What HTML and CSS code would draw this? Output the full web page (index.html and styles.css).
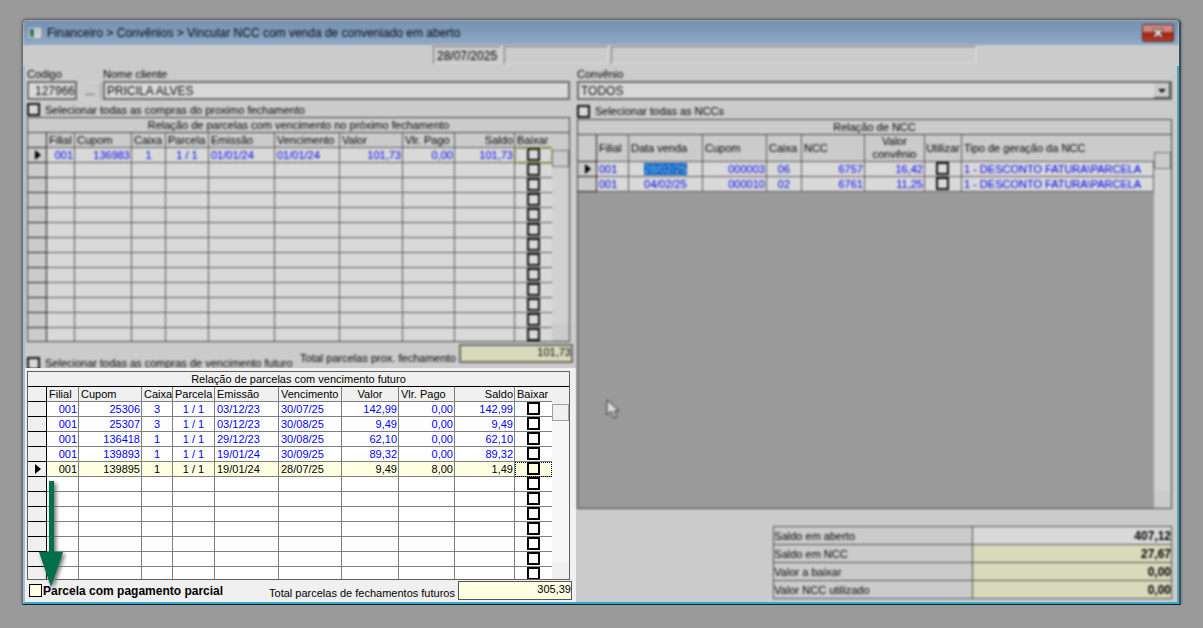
FILE: index.html
```html
<!DOCTYPE html>
<html lang="pt-BR">
  <head>
    <meta charset="UTF-8" />
    <title>Financeiro</title>
    <link rel="stylesheet" href="styles.css">
  </head>
  <body>
    <div class="window">
      <header class="titlebar soft">
        <svg class="app-icon" viewBox="0 0 14 12" width="14" height="12">
          <rect x="0" y="0" width="14" height="12" fill="#8b969c" />
          <rect x="1" y="1" width="12" height="10" fill="#d4dadb" />
          <rect x="2" y="2" width="4" height="4" fill="#2b5f80" />
          <rect x="2" y="6" width="4" height="4" fill="#2d8257" />
          <rect x="9" y="2" width="1" height="6" fill="#8b969c" />
        </svg>
        <h1>Financeiro &gt; Convênios &gt; Vincular NCC com venda de conveniado em aberto</h1>
        <button class="close" type="button" aria-label="Fechar">
          <svg viewBox="0 0 12 10" width="12" height="10">
            <path d="M1 1h3l2 2 2-2h3v1L8 5l3 3v1H8L6 7 4 9H1V8l3-3-3-3z" fill="#e4e4e4" stroke="#533" />
          </svg>
        </button>
      </header>

      <div class="status soft">
        <span class="date">28/07/2025</span>
        <span class="user"></span>
        <span class="info"></span>
      </div>

      <main class="content">
        <section class="left">
          <div class="soft">
            <div class="client">
              <div class="code">
                <label for="codigo">Codigo</label>
                <input type="text" id="codigo" value="127966" />
              </div>
              <button class="lookup" type="button">...</button>
              <div class="name">
                <label for="nome">Nome cliente</label>
                <input type="text" id="nome" value="PRICILA ALVES" />
              </div>
            </div>
            <label class="check select-all"><input type="checkbox" /> Selecionar todas as compras do proximo fechamento</label>

            <div class="grid">
              <h2 id="proximoTitle">Relação de parcelas com vencimento no próximo fechamento</h2>
              <div class="grid-body next-body">
                <table class="next" aria-labelledby="proximoTitle">
                  <colgroup>
                    <col class="marker" /><col class="filial" /><col class="cupom" /><col class="caixa" />
                    <col class="parcela" /><col class="emissao" /><col class="vencimento" /><col class="valor" />
                    <col class="pago" /><col class="saldo" /><col class="baixar" />
                  </colgroup>
                  <thead>
                    <tr>
                      <th></th><th>Filial</th><th>Cupom</th><th>Caixa</th><th>Parcela</th><th>Emissão</th>
                      <th>Vencimento</th><th>Valor</th><th>Vlr. Pago</th><th class="num">Saldo</th><th>Baixar</th>
                    </tr>
                  </thead>
                  <tbody id="nextRows"></tbody>
                </table>
                <div class="scroll"><i class="up"></i><i class="thumb"></i><i class="track"></i><i class="down"></i></div>
              </div>
            </div>

            <div class="next-total">
              <label class="check"><input type="checkbox" /> Selecionar todas as compras de vencimento futuro</label>
              <label for="totalNext">Total parcelas prox. fechamento</label>
              <input class="total" type="text" id="totalNext" value="101,73" readonly />
            </div>
          </div>

          <div class="future-panel">
            <div class="grid">
              <h2 id="futuroTitle">Relação de parcelas com vencimento futuro</h2>
              <div class="grid-body future-body">
                <table class="future" aria-labelledby="futuroTitle">
                  <colgroup>
                    <col class="marker" /><col class="filial" /><col class="cupom" /><col class="caixa" />
                    <col class="parcela" /><col class="emissao" /><col class="vencimento" /><col class="valor" />
                    <col class="pago" /><col class="saldo" /><col class="baixar" />
                  </colgroup>
                  <thead>
                    <tr>
                      <th></th><th>Filial</th><th>Cupom</th><th>Caixa</th><th>Parcela</th><th>Emissão</th>
                      <th>Vencimento</th><th class="mid">Valor</th><th>Vlr. Pago</th><th class="num">Saldo</th><th>Baixar</th>
                    </tr>
                  </thead>
                  <tbody id="futureRows"></tbody>
                </table>
                <div class="scroll"><i class="up"></i><i class="thumb"></i><i class="track"></i><i class="down"></i></div>
              </div>
            </div>
            <div class="future-total">
              <label class="check partial"><input type="checkbox" />Parcela com pagamento parcial</label>
              <label for="totalFuture">Total parcelas de fechamentos futuros</label>
              <input class="total" type="text" id="totalFuture" value="305,39" readonly />
            </div>
            <svg class="arrow" viewBox="0 0 24 106" width="24" height="106">
              <path d="M10 0h5v71h9L12 106 0 71h10z" fill="#00704a" />
            </svg>
          </div>
        </section>

        <section class="right soft">
          <label for="convenio">Convênio</label>
          <div class="combo">
            <select id="convenio">
              <option>TODOS</option>
            </select>
            <svg viewBox="0 0 16 15" width="16" height="15">
              <path d="M0 0h16v15H0z" fill="#444" />
              <path d="M0 0h15v14H0z" fill="#cbcbcb" />
              <path d="M4 6h8l-4 4z" fill="#111" />
            </svg>
          </div>
          <label class="check select-all"><input type="checkbox" /> Selecionar todas as NCCs</label>

          <div class="grid ncc-grid">
            <h2 id="nccTitle">Relação de NCC</h2>
            <div class="grid-body ncc-body">
              <div class="ncc-area">
                <table class="ncc" aria-labelledby="nccTitle">
                  <colgroup>
                    <col class="marker" /><col class="filial" /><col class="venda" /><col class="cupom" />
                    <col class="caixa" /><col class="numero" /><col class="valor" /><col class="utilizar" /><col />
                  </colgroup>
                  <thead>
                    <tr>
                      <th></th><th>Filial</th><th>Data venda</th><th>Cupom</th><th>Caixa</th><th>NCC</th>
                      <th class="mid">Valor convênio</th><th class="tick">Utilizar</th><th>Tipo de geração da NCC</th>
                    </tr>
                  </thead>
                  <tbody id="nccRows"></tbody>
                </table>
              </div>
              <div class="scroll"><i class="up"></i><i class="thumb"></i><i class="track"></i><i class="down"></i></div>
            </div>
          </div>

          <table class="summary">
            <tr><th>Saldo em aberto</th><td class="open">407,12</td></tr>
            <tr><th>Saldo em NCC</th><td>27,67</td></tr>
            <tr><th>Valor a baixar</th><td>0,00</td></tr>
            <tr><th>Valor NCC utilizado</th><td>0,00</td></tr>
          </table>
        </section>
      </main>
    </div>

    <svg class="cursor soft" viewBox="0 0 13 20" width="13" height="20">
      <path d="M1 1v15l4-4 3 7 3-1-3-6h5z" fill="#ddd" stroke="#333" />
    </svg>

    <script src="script.js"></script>
  </body>
</html>
```

FILE: styles.css
```css
body {
  font-family: "Liberation Sans", Arial, sans-serif;
  font-size: 11px;
  line-height: 14px;
  margin: 0;
  padding: 19px 22px 0;
  background-color: #9a9a9a;
  color: #000;
}
.window {
  border: 1px solid #686b6e;
  border-right: 2px solid #35525c;
  border-bottom: 1px solid #10252c;
  border-radius: 5px 5px 0 0;
  box-shadow: 0 0 3px #555;
  background-color: #cbcbcb;
  overflow: hidden;
}
/* everything outside the focused panel is drawn out of focus */
.soft {
  filter: blur(1px);
  color: #000;
}
.titlebar {
  display: flex;
  align-items: center;
  height: 25px;
  padding: 0 5px;
  background: linear-gradient(#7490b0, #8fa9c6);
}
.app-icon {
  margin-right: 5px;
}
h1 {
  flex: 1;
  margin: 0;
  font-size: 12px;
  font-weight: normal;
  color: #000a14;
}
.close {
  display: flex;
  align-items: center;
  justify-content: center;
  width: 32px;
  height: 18px;
  padding: 0;
  border: 1px solid #5b2a2a;
  border-radius: 2px;
  background: linear-gradient(#c98a80 40%, #a01c08 50%, #b5402c);
}
.status {
  display: flex;
  gap: 3px;
  padding: 1px 203px 2px 410px;
}
.status span {
  height: 18px;
  line-height: 18px;
  box-sizing: border-box;
  border: 1px solid #dcdcdc;
  border-top-color: #777;
  border-left-color: #777;
  padding: 0 3px;
}
.status .date {
  width: 68px;
  font-size: 12px;
}
.status .user {
  width: 104px;
}
.status .info {
  flex: 1;
}
.content {
  display: grid;
  grid-template-columns: 11fr 12fr;
  border-left: 2px solid #a9bed2;
  border-right: 2px solid #57a3b8;
  border-bottom: 2px solid #35aac6;
}
.left {
  min-width: 0;
}
input[type="text"],
select {
  font: inherit;
  display: block;
  width: 100%;
  height: 19px;
  margin: 0;
  padding: 0 2px;
  box-sizing: border-box;
  border: 2px solid #6c6c6c;
  border-radius: 0;
  background-color: #d9d9d9;
  color: #111;
}
.client {
  display: flex;
  align-items: flex-end;
  padding: 1px 6px 0 2px;
}
.client input[type="text"] {
  font-size: 12px;
}
.client .code {
  width: 50px;
}
.client .code input {
  text-align: right;
  padding: 0;
}
.client .name {
  flex: 1;
}
.lookup {
  width: 22px;
  height: 18px;
  margin: 0 2px;
  padding: 0;
  border: 1px solid #d4d4d4;
  border-right-color: #999;
  background-color: #cbcbcb;
  font: inherit;
}
.check {
  display: flex;
  align-items: center;
  gap: 5px;
}
input[type="checkbox"] {
  appearance: none;
  display: block;
  flex: none;
  width: 13px;
  height: 13px;
  margin: 0;
  box-sizing: border-box;
  border: 2px solid #000;
  background-color: #fff;
}
.soft input[type="checkbox"] {
  border-color: #111;
  background-color: #d9d9d9;
}
.select-all {
  height: 17px;
  padding: 2px 0 0 2px;
  box-sizing: border-box;
}

/* data grids */
.grid {
  margin: 0 6px 0 2px;
  border: 1px solid #606060;
}
.grid h2 {
  margin: 0;
  border-bottom: 1px solid #000;
  font-size: 11px;
  font-weight: normal;
  text-align: center;
}
.soft .grid,
.soft .grid h2 {
  border-color: #444;
}
.grid-body {
  display: flex;
  align-items: flex-start;
  overflow: hidden;
}
.next-body {
  height: 208px;
}
.future-body {
  height: 192px;
}
.grid table {
  flex: 1;
  width: 100%;
  table-layout: fixed;
  border-collapse: separate;
  border-spacing: 0;
}
.grid th,
.grid td {
  height: 15px;
  padding: 0 2px;
  box-sizing: border-box;
  border-right: 1px solid #808080;
  border-bottom: 1px solid #808080;
  font-weight: normal;
  text-align: left;
  white-space: nowrap;
  overflow: hidden;
}
.soft .grid th,
.soft .grid td {
  border-color: #5c5c5c;
}
.grid td {
  background-color: #fff;
  color: #00f;
}
.soft .grid td {
  background-color: #d9d9d9;
  color: #0000f0;
}
.grid tr > :first-child,
.soft .grid tr > :first-child {
  padding: 0;
  border-color: #000;
  background-color: #f0f0f0;
}
.soft .grid tr > :first-child {
  border-color: #222;
  background-color: #cbcbcb;
}
.grid .num {
  text-align: right;
  padding-right: 1px;
}
.grid .mid {
  text-align: center;
}
.grid .tick {
  padding: 0;
  text-align: center;
  vertical-align: top;
}
.grid th.tick {
  vertical-align: middle;
}
.next .tick,
.future .tick,
.grid th:last-child {
  border-right: 0;
}
.grid .tick input {
  margin: 0 auto;
}
.grid tr.current td {
  background-color: #ffffe1;
  color: #000;
}
.grid tr.current td:first-child {
  background-color: #f0f0f0;
}
.grid tr.current .tick {
  outline: 1px dotted #000;
  outline-offset: -1px;
}
.grid tr.current input[type="checkbox"] {
  background-color: #ffffe1;
}
.next tr.focus .tick {
  outline: 2px dotted #77770c;
  outline-offset: -1px;
}
.pointer {
  display: block;
  margin-left: 7px;
}
.marker {
  width: 19px;
}
.next .filial { width: 28px; }
.next .cupom { width: 57px; }
.next .caixa { width: 34px; }
.next .parcela { width: 43px; }
.next .emissao { width: 66px; }
.next .vencimento { width: 65px; }
.next .valor { width: 63px; }
.next .pago { width: 52px; }
.next .saldo { width: 60px; }
.next .baixar { width: 37px; }

.future .filial { width: 32px; }
.future .cupom { width: 63px; }
.future .caixa { width: 31px; }
.future .parcela { width: 42px; }
.future .emissao { width: 64px; }
.future .vencimento { width: 63px; }
.future .valor { width: 57px; }
.future .pago { width: 56px; }
.future .saldo { width: 60px; }
.future .baixar { width: 37px; }

.ncc .filial { width: 32px; }
.ncc .venda { width: 74px; }
.ncc .cupom { width: 64px; }
.ncc .caixa { width: 35px; }
.ncc .numero { width: 63px; }
.ncc .valor { width: 60px; }
.ncc .utilizar { width: 37px; }

.scroll {
  display: flex;
  flex-direction: column;
  align-self: stretch;
  flex: none;
  width: 17px;
}
.scroll .up,
.scroll .thumb,
.scroll .down {
  height: 17px;
  box-sizing: border-box;
  background-color: #f0f0f0;
}
.scroll .thumb {
  border: 1px solid #a0a0a0;
}
.scroll .track {
  flex: 1;
  background-color: #f7f7f7;
}
.soft .scroll .up,
.soft .scroll .thumb,
.soft .scroll .down {
  background-color: #cbcbcb;
}
.soft .scroll .thumb {
  border-color: #777;
}
.soft .scroll .track {
  background-color: #d1d1d1;
}

/* totals under the grids */
.next-total,
.future-total {
  display: flex;
  align-items: flex-end;
}
.next-total {
  height: 26px;
  padding: 2px 3px 0 2px;
  box-sizing: border-box;
  align-items: flex-start;
}
.next-total .check,
.future-total .check {
  flex: 1;
}
.next-total .check {
  margin-top: 12px;
}
.next-total > :nth-child(2) {
  margin-top: 7px;
}
input.total {
  width: 114px;
  margin-left: 3px;
  padding: 0 0 4px;
  border: 1px solid #555;
  background-color: #ffffe1;
  color: #000;
  text-align: right;
}
.soft input.total {
  border: 2px solid #6c6c6c;
  background-color: #d9d9bb;
}
.future-panel {
  position: relative;
  padding-top: 3px;
  background-color: #f0f0f0;
}
.future-total {
  padding: 1px 4px 2px;
}
.partial {
  gap: 1px;
  font-size: 12px;
  font-weight: bold;
  align-self: center;
}
.partial input[type="checkbox"] {
  border-width: 1px;
  background-color: #ffffe1;
}
.arrow {
  position: absolute;
  left: 14px;
  top: 113px;
  filter: drop-shadow(2px 2px 2px #666);
  overflow: visible;
}

/* NCC side */
.right {
  display: flex;
  flex-direction: column;
  min-width: 0;
  padding: 1px 5px 3px 1px;
}
.combo {
  position: relative;
}
.combo select {
  appearance: none;
  font-size: 12px;
}
.combo svg {
  position: absolute;
  right: 2px;
  top: 2px;
}
.right .select-all {
  height: 19px;
  padding: 3px 0 0;
}
.ncc-grid {
  display: flex;
  flex-direction: column;
  flex: 1;
  margin: 0;
}
.ncc-body {
  flex: 1;
}
.ncc-area {
  flex: 1;
  align-self: stretch;
  background-color: #9a9a9a;
}
.ncc thead {
  background-color: #cbcbcb;
}
.ncc .mid {
  white-space: normal;
  line-height: 13px;
}
.ncc .picked {
  background-color: #0a5fc0;
  color: #8fbcf0;
}
.summary {
  align-self: flex-end;
  width: 67%;
  margin-top: 17px;
  table-layout: fixed;
  border-collapse: collapse;
}
.summary th,
.summary td {
  height: 17px;
  padding: 0;
  border: 1px solid #555;
  font-weight: normal;
  text-align: left;
  line-height: 16px;
}
.summary td {
  background-color: #d9d9bb;
  font-size: 12px;
  font-weight: bold;
  text-align: right;
}
.summary .open {
  background-color: #d9d9d9;
}
.cursor {
  position: absolute;
  left: 606px;
  top: 399px;
}
```

FILE: script.js
```js
const pointer =
  '<svg class="pointer" viewBox="0 0 6 10" width="6" height="10"><path d="M0 0l6 5-6 5z" fill="#000" /></svg>';
const tick = '<input type="checkbox" aria-label="Marcar" />';

// Column classes, in the order of the fields
const installmentCols = ["num", "num", "mid", "mid", "", "", "num", "num", "num"];
const nccCols = ["", "mid", "num", "mid", "num", "num", "tick", ""];

const nextRows = [
  ["001", "136983", "1", "1 / 1", "01/01/24", "01/01/24", "101,73", "0,00", "101,73"],
];
const futureRows = [
  ["001", "25306", "3", "1 / 1", "03/12/23", "30/07/25", "142,99", "0,00", "142,99"],
  ["001", "25307", "3", "1 / 1", "03/12/23", "30/08/25", "9,49", "0,00", "9,49"],
  ["001", "136418", "1", "1 / 1", "29/12/23", "30/08/25", "62,10", "0,00", "62,10"],
  ["001", "139893", "1", "1 / 1", "19/01/24", "30/09/25", "89,32", "0,00", "89,32"],
  ["001", "139895", "1", "1 / 1", "19/01/24", "28/07/25", "9,49", "8,00", "1,49"],
];
const nccRows = [
  ["001", '<span class="picked">28/02/25</span>', "000003", "06", "6757", "16,42", tick, "1 - DESCONTO FATURA\\PARCELA"],
  ["001", "04/02/25", "000010", "02", "6761", "11,25", tick, "1 - DESCONTO FATURA\\PARCELA"],
];

function rowHtml(fields, cols, active, rowClass) {
  const cells = cols.map((c, i) => `<td class="${c}">${fields[i] || ""}</td>`).join("");
  return `<tr class="${active ? rowClass : ""}"><td>${active ? pointer : ""}</td>${cells}`;
}

// Fill an installments grid, padding it with empty rows up to count
function fillInstallments(id, rows, count, active, rowClass) {
  let html = "";
  for (let i = 0; i < count; i++) {
    html += rowHtml(rows[i] || [], installmentCols, i === active, rowClass);
    html += `<td class="tick">${tick}</td></tr>`;
  }
  document.getElementById(id).innerHTML = html;
}

fillInstallments("nextRows", nextRows, 13, 0, "focus");
fillInstallments("futureRows", futureRows, 12, 4, "current");
document.getElementById("nccRows").innerHTML = nccRows
  .map((r, i) => rowHtml(r, nccCols, i === 0, "focus") + "</tr>")
  .join("");
```
